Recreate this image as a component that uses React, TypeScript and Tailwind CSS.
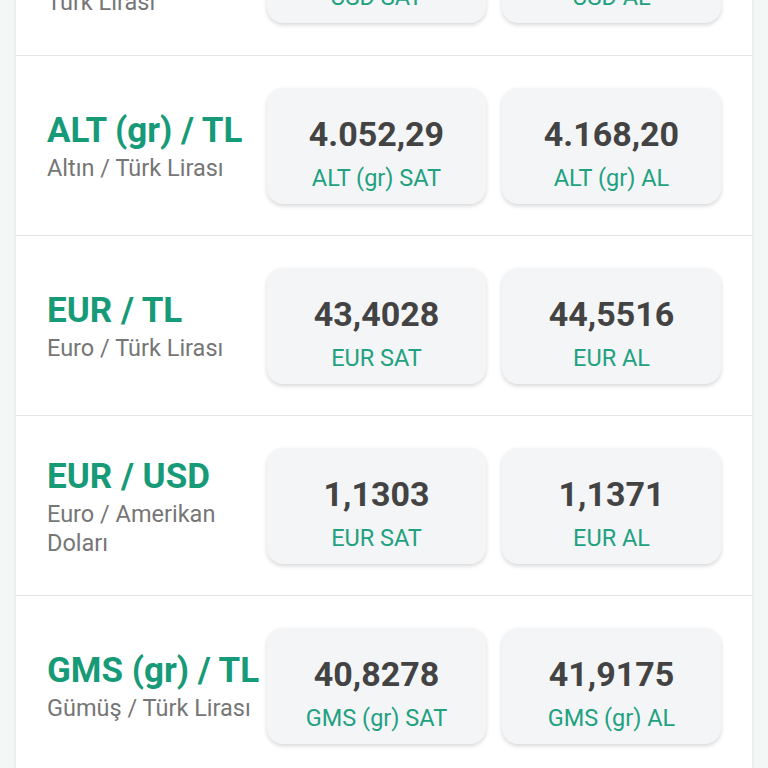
import React from 'react';

type Rate = {
  code: string;
  title: string;
  subtitle: string;
  sell: string;
  buy: string;
};

const rates: Rate[] = [
  { code: 'USD', title: 'USD / TL', subtitle: 'Amerikan Doları / Türk Lirası', sell: '38,4012', buy: '39,4088' },
  { code: 'ALT (gr)', title: 'ALT (gr) / TL', subtitle: 'Altın / Türk Lirası', sell: '4.052,29', buy: '4.168,20' },
  { code: 'EUR', title: 'EUR / TL', subtitle: 'Euro / Türk Lirası', sell: '43,4028', buy: '44,5516' },
  { code: 'EUR', title: 'EUR / USD', subtitle: 'Euro / Amerikan Doları', sell: '1,1303', buy: '1,1371' },
  { code: 'GMS (gr)', title: 'GMS (gr) / TL', subtitle: 'Gümüş / Türk Lirası', sell: '40,8278', buy: '41,9175' },
];

function PriceCard({ value, label }: { value: string; label: string }) {
  return (
    <div className="w-[219px] flex flex-col items-center rounded-[16px] bg-[#f4f5f7] pt-[28px] pb-[12px] shadow-[0_2px_4px_rgba(0,0,0,0.16)]">
      <span className="text-[34px] leading-[36px] font-bold text-[#434343]">{value}</span>
      <span className="mt-[12px] text-[23.5px] leading-[28px] text-[#22a181]">{label}</span>
    </div>
  );
}

export default function App() {
  return (
    <div className="h-[768px] overflow-hidden bg-[#f3f8f7] font-['Roboto',sans-serif]">
      <div className="mx-4 -mt-[125px] bg-white shadow-[0_0_3px_rgba(0,0,0,0.12)]">
        {rates.map((r, i) => (
          <div
            key={r.title}
            className={`h-[180px] flex items-center px-[31px] ${i > 0 ? 'border-t border-[#e4e4e4]' : ''}`}
          >
            <div className="w-[220px] pt-[3px] flex flex-col">
              <span className="whitespace-nowrap text-[35px] leading-[40px] font-bold text-[#179a77]">{r.title}</span>
              <span className="mt-[3px] pr-1 text-[23.5px] leading-[29px] text-[#767676]">{r.subtitle}</span>
            </div>
            <div className="flex gap-4">
              <PriceCard value={r.sell} label={`${r.code} SAT`} />
              <PriceCard value={r.buy} label={`${r.code} AL`} />
            </div>
          </div>
        ))}
      </div>
    </div>
  );
}
